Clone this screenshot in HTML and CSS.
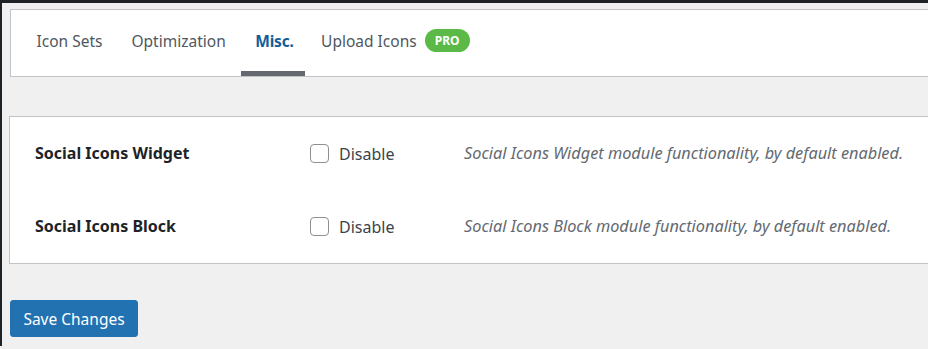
FILE: index.html
```html
<!DOCTYPE html>
<html>
<head>
<meta charset="utf-8">
<link rel="stylesheet" href="styles.css">
</head>
<body>
<div class="page">
  <nav class="tabs">
    <a class="tab">Icon Sets</a>
    <a class="tab">Optimization</a>
    <a class="tab active">Misc.</a>
    <a class="tab">Upload Icons <span class="pro">PRO</span></a>
  </nav>
  <div class="card">
    <div class="row">
      <div class="label">Social Icons Widget</div>
      <label class="check"><span class="box"></span>Disable</label>
      <div class="desc">Social Icons Widget module functionality, by default enabled.</div>
    </div>
    <div class="row">
      <div class="label">Social Icons Block</div>
      <label class="check"><span class="box"></span>Disable</label>
      <div class="desc">Social Icons Block module functionality, by default enabled.</div>
    </div>
  </div>
  <button class="save">Save Changes</button>
</div>
</body>
</html>
```
FILE: styles.css
```css
html, body { margin: 0; padding: 0; }
body {
  background: #f0f0f1;
  font-family: "Noto Sans", "Open Sans", sans-serif;
  color: #1d2327;
  height: 349px;
  overflow: hidden;
}
.page {
  border-top: 3px solid #1d2327;
  border-left: 2px solid #1d2327;
  height: 346px;
  box-sizing: border-box;
  padding: 6px 0 0 7px;
}
.tabs {
  display: flex;
  align-items: stretch;
  background: #fff;
  border: 1px solid #c3c4c7;
  border-right: none;
  margin-left: 1px;
  height: 66px;
  padding-left: 11px;
}
.tab {
  display: flex;
  align-items: center;
  padding: 0 14.5px;
  font-size: 15.5px;
  color: #50575e;
  border-bottom: 5px solid transparent;
}
.tab.active {
  color: #135e96;
  font-weight: 700;
  border-bottom-color: #646970;
  padding: 0 11px 0 14px;
  margin: 0 2px 0 1px;
  letter-spacing: -0.2px;
}
.pro {
  display: inline-block;
  margin-left: 8px;
  background: #5bb947;
  color: #fff;
  font-size: 12px;
  font-weight: 700;
  padding: 3px 10px;
  border-radius: 12px;
  line-height: 17px;
}
.card {
  margin-top: 39px;
  background: #fff;
  border: 1px solid #c3c4c7;
  border-right: none;
  padding: 0 0 0 25px;
}
.row {
  display: grid;
  grid-template-columns: 275px 154px 1fr;
  align-items: center;
  height: 73px;
}
.label {
  font-weight: 700;
  font-size: 16px;
  color: #1d2327;
  margin-top: -2px;
}
.check {
  display: flex;
  align-items: center;
  font-size: 16px;
  color: #3c434a;
}
.box {
  width: 17px;
  height: 17px;
  border: 1px solid #8c8f94;
  border-radius: 4px;
  margin-right: 10px;
  background: #fff;
}
.desc {
  font-style: italic;
  font-size: 16.3px;
  color: #646970;
  margin-top: -2px;
}
.save {
  margin-top: 36px;
  margin-left: 1px;
  width: 128px;
  height: 37px;
  background: #2271b1;
  border: 1px solid #2271b1;
  border-radius: 3px;
  color: #fff;
  font-family: inherit;
  font-size: 15.5px;
  padding: 0;
}
```
